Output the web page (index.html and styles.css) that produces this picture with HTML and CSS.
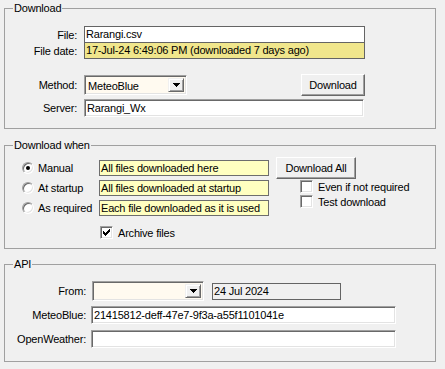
FILE: index.html
```html
<!DOCTYPE html>
<html>
<head>
<meta charset="utf-8">
<link rel="stylesheet" href="styles.css">
</head>
<body>
<div class="dlg">
  <fieldset class="grp g1">
    <legend>Download</legend>
    <div class="row r-file"><span class="lbl">File:</span><div class="flat file">Rarangi.csv</div></div>
    <div class="row r-date"><span class="lbl">File date:</span><div class="flat date">17-Jul-24 6:49:06 PM (downloaded 7 days ago)</div></div>
    <div class="row r-method">
      <span class="lbl">Method:</span>
      <div class="combo c-method"><span class="combo-text">MeteoBlue</span><span class="drop"><svg width="7" height="4" viewBox="0 0 7 4"><path d="M0 0h7v1H0zM1 1h5v1H1zM2 2h3v1H2zM3 3h1v1H3z" fill="#000"/></svg></span></div>
      <button class="btn btn-dl">Download</button>
    </div>
    <div class="row r-server"><span class="lbl">Server:</span><div class="sunk server">Rarangi_Wx</div></div>
  </fieldset>

  <fieldset class="grp g2">
    <legend>Download when</legend>
    <div class="when">
      <div class="opts">
        <div class="opt"><span class="radio on"></span><span class="opt-lbl">Manual</span><div class="note">All files downloaded here</div></div>
        <div class="opt"><span class="radio"></span><span class="opt-lbl">At startup</span><div class="note">All files downloaded at startup</div></div>
        <div class="opt"><span class="radio"></span><span class="opt-lbl">As required</span><div class="note">Each file downloaded as it is used</div></div>
        <div class="chk-row archive"><span class="chk"><svg width="7" height="7" viewBox="0 0 7 7"><path d="M6 0h1v1H6zM5 1h2v1H5zM0 2h1v1H0zM4 2h3v1H4zM0 3h2v1H0zM3 3h3v1H3zM0 4h5v1H0zM1 5h3v1H1zM2 6h1v1H2z" fill="#000"/></svg></span><span>Archive files</span></div>
      </div>
      <div class="side">
        <button class="btn btn-all">Download All</button>
        <div class="chk-row"><span class="chk"></span><span>Even if not required</span></div>
        <div class="chk-row"><span class="chk"></span><span>Test download</span></div>
      </div>
    </div>
  </fieldset>

  <fieldset class="grp g3">
    <legend>API</legend>
    <div class="row r-from">
      <span class="lbl lbl-api">From:</span>
      <div class="combo c-from"><span class="combo-text"></span><span class="drop"><svg width="7" height="4" viewBox="0 0 7 4"><path d="M0 0h7v1H0zM1 1h5v1H1zM2 2h3v1H2zM3 3h1v1H3z" fill="#000"/></svg></span></div>
      <div class="flat datebox">24 Jul 2024</div>
    </div>
    <div class="row r-mb"><span class="lbl lbl-api">MeteoBlue:</span><div class="sunk key">21415812-deff-47e7-9f3a-a55f1101041e</div></div>
    <div class="row r-ow"><span class="lbl lbl-api">OpenWeather:</span><div class="sunk key"></div></div>
  </fieldset>
</div>
</body>
</html>
```

FILE: styles.css
```css
html, body {
  margin: 0;
  padding: 0;
}
body {
  background: #f0f0f0;
  font-family: "Liberation Sans", Arial, sans-serif;
  font-size: 11px;
  letter-spacing: -0.2px;
  color: #000;
  width: 445px;
  height: 369px;
  overflow: hidden;
}
.dlg {
  padding-top: 2px;
}
.grp {
  margin: 0 9px 0 4px;
  border: 1px solid #a0a0a0;
  padding: 0;
  min-width: 0;
}
.grp legend {
  margin-left: 8px;
  padding: 0 1px;
  line-height: 13px;
  font-size: 11px;
}
.row {
  display: flex;
  align-items: center;
}
.lbl {
  width: 72px;
  margin-right: 7px;
  text-align: right;
  white-space: nowrap;
}
.flat {
  box-sizing: border-box;
  border: 1px solid #646464;
  padding-left: 1px;
  line-height: 14px;
  white-space: nowrap;
  overflow: hidden;
}
.sunk {
  box-sizing: border-box;
  border: 1px solid;
  border-color: #a0a0a0 #fff #fff #a0a0a0;
  box-shadow: inset 1px 1px #696969, inset -1px -1px #e3e3e3;
  background: #fff;
  padding-left: 2px;
  white-space: nowrap;
  overflow: hidden;
}

/* group 1 */
.g1 {
  padding: 11px 0 11px 0;
}
.file {
  width: 281px;
  height: 17px;
  background: #fff;
}
.date {
  width: 281px;
  height: 16px;
  border-top: none;
  background: #f0e68c;
}
.r-method {
  margin-top: 15px;
}
.combo {
  box-sizing: border-box;
  display: flex;
  align-items: stretch;
  border: 1px solid;
  border-color: #a0a0a0 #fff #fff #a0a0a0;
  box-shadow: inset 1px 1px #696969, inset -1px -1px #e3e3e3;
  background: #fffaf0;
  padding: 2px;
  height: 20px;
}
.combo-text {
  flex: 1;
  line-height: 16px;
  padding-left: 1px;
}
.drop {
  width: 16px;
  box-sizing: border-box;
  background: #f0f0f0;
  border: 1px solid;
  border-color: #f0f0f0 #696969 #696969 #f0f0f0;
  box-shadow: inset 1px 1px #fff, inset -1px -1px #a0a0a0;
  display: flex;
  align-items: center;
  justify-content: center;
}
.c-method {
  width: 103px;
}
.btn {
  font: inherit;
  letter-spacing: inherit;
  color: #000;
  background: #f0f0f0;
  margin: 0;
  padding: 0;
  box-sizing: border-box;
  border: 1px solid;
  border-color: #fff #696969 #696969 #fff;
  box-shadow: inset -1px -1px #a0a0a0;
  height: 22px;
}
.btn-dl {
  width: 64px;
  margin-left: auto;
  margin-right: 70px;
}
.r-server {
  margin-top: 3px;
}
.server {
  width: 280px;
  height: 18px;
  line-height: 16px;
}

/* group 2 */
.g2 {
  margin-top: 10px;
  padding: 5px 0 9px 0;
}
.when {
  display: flex;
  align-items: flex-start;
}
.opts {
  padding-left: 17px;
  padding-top: 3px;
  display: flex;
  flex-direction: column;
  gap: 4px;
}
.opt {
  display: flex;
  align-items: center;
}
.radio {
  box-sizing: border-box;
  width: 12px;
  height: 12px;
  border-radius: 50%;
  background: #fff;
  border: 1px solid;
  border-color: #a0a0a0 #fff #fff #a0a0a0;
  box-shadow: inset 1px 1px #696969, inset -1px -1px #e3e3e3;
  display: flex;
  align-items: center;
  justify-content: center;
  margin-right: 4px;
}
.radio.on::after {
  content: "";
  width: 4px;
  height: 4px;
  border-radius: 50%;
  background: #000;
}
.opt-lbl {
  width: 61px;
}
.note {
  box-sizing: border-box;
  width: 170px;
  height: 16px;
  border: 1px solid #6d6d6d;
  background: #ffffc0;
  line-height: 14px;
  padding-left: 1px;
  white-space: nowrap;
  overflow: hidden;
}
.chk-row {
  display: flex;
  align-items: center;
  height: 13px;
}
.chk {
  box-sizing: border-box;
  width: 13px;
  height: 13px;
  background: #fff;
  border: 1px solid;
  border-color: #a0a0a0 #fff #fff #a0a0a0;
  box-shadow: inset 1px 1px #696969, inset -1px -1px #e3e3e3;
  display: flex;
  align-items: center;
  justify-content: center;
  margin-right: 5px;
  flex: none;
}
.archive {
  margin-top: 6px;
  margin-left: 78px;
}
.side {
  margin-left: 7px;
  display: flex;
  flex-direction: column;
}
.btn-all {
  width: 80px;
}
.side .chk-row {
  margin-left: 24px;
  margin-top: 2px;
}
.side .btn-all + .chk-row {
  margin-top: 1px;
}

/* group 3 */
.g3 {
  margin-top: 9px;
  padding: 10px 0 13px 0;
}
.lbl-api {
  width: 81px;
  margin-right: 5px;
}
.c-from {
  width: 112px;
  margin-left: 1px;
}
.datebox {
  margin-left: 8px;
  width: 129px;
  height: 17px;
  line-height: 15px;
  background: #f0f0f0;
}
.r-mb {
  margin-top: 5px;
}
.r-ow {
  margin-top: 6px;
}
.key {
  width: 305px;
  height: 18px;
  line-height: 16px;
}
```
